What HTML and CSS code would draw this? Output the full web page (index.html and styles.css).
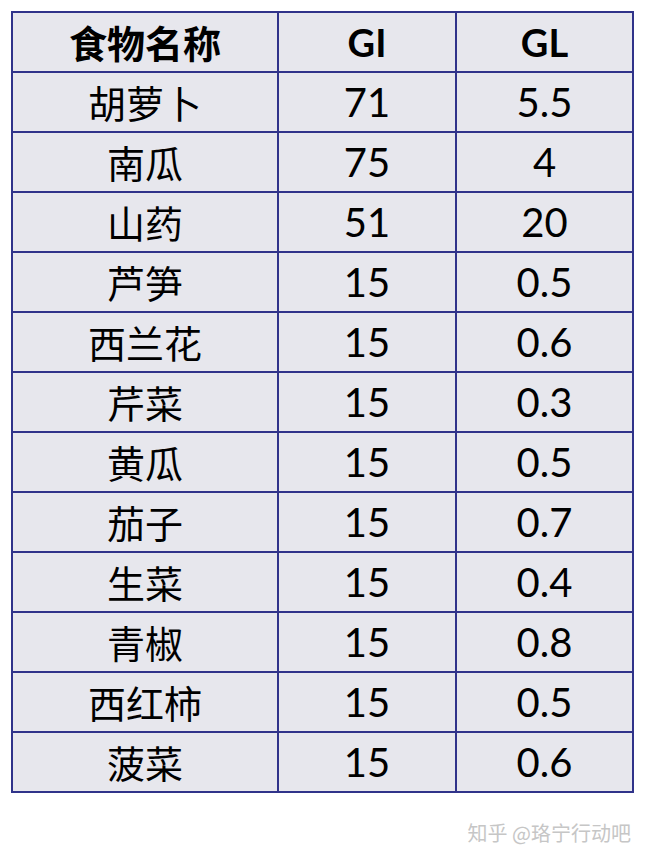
FILE: index.html
```html
<!DOCTYPE html>
<html lang="zh-CN">
<head>
<meta charset="utf-8">
<link rel="stylesheet" href="styles.css">
</head>
<body>
<div class="page">
  <table class="gi-table">
    <colgroup>
      <col class="c-name">
      <col class="c-gi">
      <col class="c-gl">
    </colgroup>
    <thead>
      <tr><th class="cn">食物名称</th><th>GI</th><th>GL</th></tr>
    </thead>
    <tbody>
      <tr><td class="cn">胡萝卜</td><td>71</td><td>5.5</td></tr>
      <tr><td class="cn">南瓜</td><td>75</td><td>4</td></tr>
      <tr><td class="cn">山药</td><td>51</td><td>20</td></tr>
      <tr><td class="cn">芦笋</td><td>15</td><td>0.5</td></tr>
      <tr><td class="cn">西兰花</td><td>15</td><td>0.6</td></tr>
      <tr><td class="cn">芹菜</td><td>15</td><td>0.3</td></tr>
      <tr><td class="cn">黄瓜</td><td>15</td><td>0.5</td></tr>
      <tr><td class="cn">茄子</td><td>15</td><td>0.7</td></tr>
      <tr><td class="cn">生菜</td><td>15</td><td>0.4</td></tr>
      <tr><td class="cn">青椒</td><td>15</td><td>0.8</td></tr>
      <tr><td class="cn">西红柿</td><td>15</td><td>0.5</td></tr>
      <tr><td class="cn">菠菜</td><td>15</td><td>0.6</td></tr>
    </tbody>
  </table>
  <div class="watermark">知乎 @珞宁行动吧</div>
</div>
</body>
</html>
```
FILE: styles.css
```css
html, body {
  margin: 0;
  padding: 0;
  background: #ffffff;
}
.page {
  width: 645px;
  height: 864px;
  padding: 11px 0 0 11px;
  box-sizing: border-box;
}
.gi-table {
  border-collapse: collapse;
  table-layout: fixed;
  width: 623px;
  background: #e7e7ed;
  border: 2px solid #30338a;
}
.c-name { width: 266px; }
.c-gi { width: 178px; }
.c-gl { width: 177px; }
.gi-table th,
.gi-table td {
  border: 2px solid #30338a;
  height: 58px;
  padding: 0;
  text-align: center;
  vertical-align: middle;
  color: #000000;
  font-family: "Lato", "Open Sans", "Noto Sans CJK SC", sans-serif;
  font-size: 40px;
  font-weight: 400;
  line-height: 1;
}
.gi-table th {
  font-size: 38px;
  font-weight: 700;
}
.gi-table .cn {
  font-family: "Noto Sans CJK SC", sans-serif;
  font-size: 38px;
}
.watermark {
  margin-top: 30px;
  width: 623px;
  text-align: right;
  padding-right: 3px;
  box-sizing: border-box;
  font-family: "Noto Sans CJK SC", sans-serif;
  font-size: 20px;
  color: #c6c6c6;
  line-height: 1;
}
```
